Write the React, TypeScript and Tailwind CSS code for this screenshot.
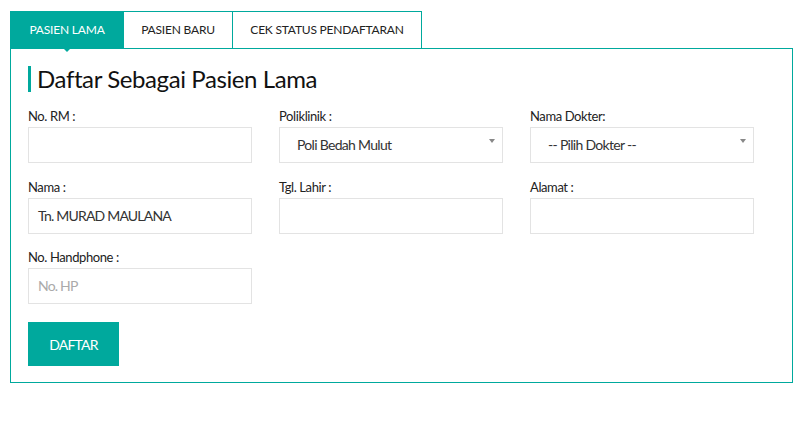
import React from 'react';

const font = { fontFamily: 'Lato, "Open Sans", sans-serif' };

const Field: React.FC<{ label: string; value?: string; placeholder?: string }> = ({ label, value, placeholder }) => (
    <div className="flex flex-col">
        <label className="text-[13px] leading-[18px] tracking-[-0.4px] text-[#222] mb-[2px]">{label}</label>
        <div className="h-[36px] border border-[#e3e3e3] flex items-center px-[9px] pb-[2px] text-[14px] tracking-[-0.8px]">
            {value ? <span className="text-[#333]">{value}</span> : <span className="text-[#aaa]">{placeholder}</span>}
        </div>
    </div>
);

const SelectField: React.FC<{ label: string; value: string }> = ({ label, value }) => (
    <div className="flex flex-col">
        <label className="text-[13px] leading-[18px] tracking-[-0.4px] text-[#222] mb-[2px]">{label}</label>
        <div className="relative h-[36px] border border-[#e3e3e3] flex items-center pl-[17px] pb-[2px] text-[14px] tracking-[-0.7px] text-[#333]">
            <span>{value}</span>
            <span className="absolute right-[7px] top-[11px] w-0 h-0 border-l-[3px] border-r-[3px] border-t-[4px] border-l-transparent border-r-transparent border-t-[#888]" />
        </div>
    </div>
);

const App: React.FC = () => {
    return (
        <div className="w-[805px] h-[422px] bg-white pt-[11px] pl-[10px]" style={font}>
            <div className="w-[783px]">
                <div className="flex text-[12px] uppercase tracking-[-0.2px]">
                    <div className="relative w-[114px] h-[37px] bg-[#00a99d] border border-b-0 border-[#00a99d] text-white flex items-center justify-center">
                        Pasien Lama
                        <span className="absolute left-1/2 -translate-x-1/2 top-[36px] w-0 h-0 border-l-[4px] border-r-[4px] border-t-[4px] border-l-transparent border-r-transparent border-t-[#00a99d]" />
                    </div>
                    <div className="w-[109px] h-[37px] border-t border-r border-[#00a99d] text-[#222] flex items-center justify-center">
                        Pasien Baru
                    </div>
                    <div className="w-[189px] h-[37px] border-t border-r border-[#00a99d] text-[#222] flex items-center justify-center">
                        Cek Status Pendaftaran
                    </div>
                </div>

                <div className="border border-[#00a99d] pl-[17px] pt-[17px] pb-[16px]">
                    <h2 className="border-l-[3px] border-[#00a99d] pl-[6px] text-[24px] leading-[26px] tracking-[-0.4px] text-[#111]">
                        Daftar Sebagai Pasien Lama
                    </h2>

                    <div className="grid grid-cols-[224px_224px_224px] gap-x-[27px] mt-[15px]">
                        <Field label="No. RM :" />
                        <SelectField label="Poliklinik :" value="Poli Bedah Mulut" />
                        <SelectField label="Nama Dokter:" value="-- Pilih Dokter --" />
                    </div>

                    <div className="grid grid-cols-[224px_224px_224px] gap-x-[27px] mt-[15px]">
                        <Field label="Nama :" value="Tn. MURAD MAULANA" />
                        <Field label="Tgl. Lahir :" />
                        <Field label="Alamat :" />
                    </div>

                    <div className="grid grid-cols-[224px_224px_224px] gap-x-[27px] mt-[14px]">
                        <Field label="No. Handphone :" placeholder="No. HP" />
                    </div>

                    <button className="mt-[18px] w-[91px] h-[44px] bg-[#00a99d] text-white text-[14px] tracking-[-0.8px] uppercase">
                        Daftar
                    </button>
                </div>
            </div>
        </div>
    );
};

export default App;
